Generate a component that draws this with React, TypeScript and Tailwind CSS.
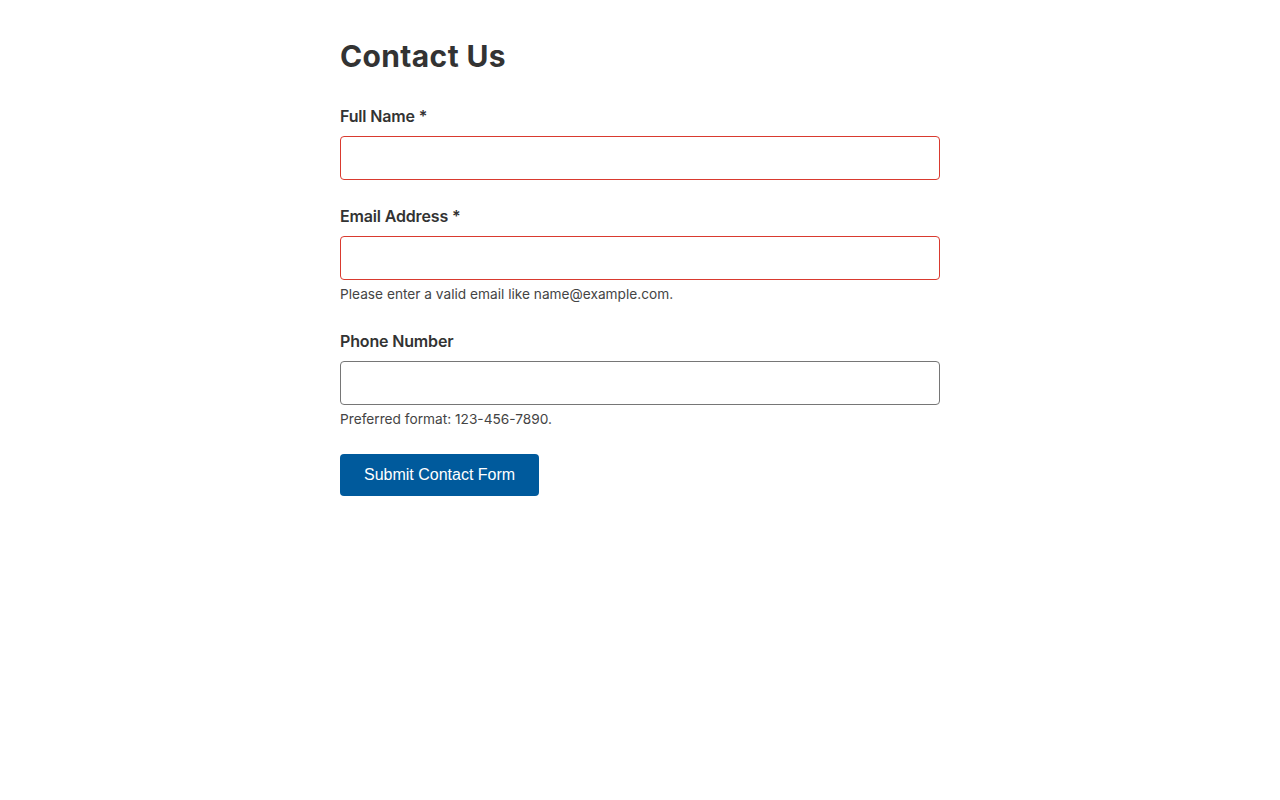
import React from "react";

const inter = { fontFamily: "Inter, 'Noto Sans', sans-serif" };

function Field({
  label,
  helper,
  error,
  type = "text",
}: {
  label: string;
  helper?: string;
  error?: boolean;
  type?: string;
}) {
  return (
    <div className="mb-6 flex flex-col">
      <label className="mb-2 text-[16px] leading-6 font-semibold tracking-[-0.01em] text-[#333333]">{label}</label>
      <input
        type={type}
        className={`h-[44px] w-full rounded-[4px] border bg-white px-3 text-[16px] outline-none ${
          error ? "border-[#d93a2f]" : "border-[#767676]"
        }`}
      />
      {helper && (
        <p className="mt-1 text-[13.7px] leading-[21px] text-[#444444]">{helper}</p>
      )}
    </div>
  );
}

export default function App() {
  return (
    <div className="min-h-screen bg-white" style={inter}>
      <div className="mx-auto w-[600px] pt-[38px]">
        <h1 className="mb-[30px] text-[30px] leading-9 font-bold tracking-[0.012em] text-[#333333]">Contact Us</h1>
        <form onSubmit={(e) => e.preventDefault()}>
          <Field label="Full Name *" error />
          <Field
            label="Email Address *"
            type="email"
            error
            helper="Please enter a valid email like name@example.com."
          />
          <Field label="Phone Number" type="tel" helper="Preferred format: 123-456-7890." />
          <button
            type="submit"
            className="h-[42px] rounded-[4px] bg-[#005a9c] px-6 text-[16px] text-white"
            style={{ fontFamily: "'Liberation Sans', Arial, sans-serif" }}
          >
            Submit Contact Form
          </button>
        </form>
      </div>
    </div>
  );
}
